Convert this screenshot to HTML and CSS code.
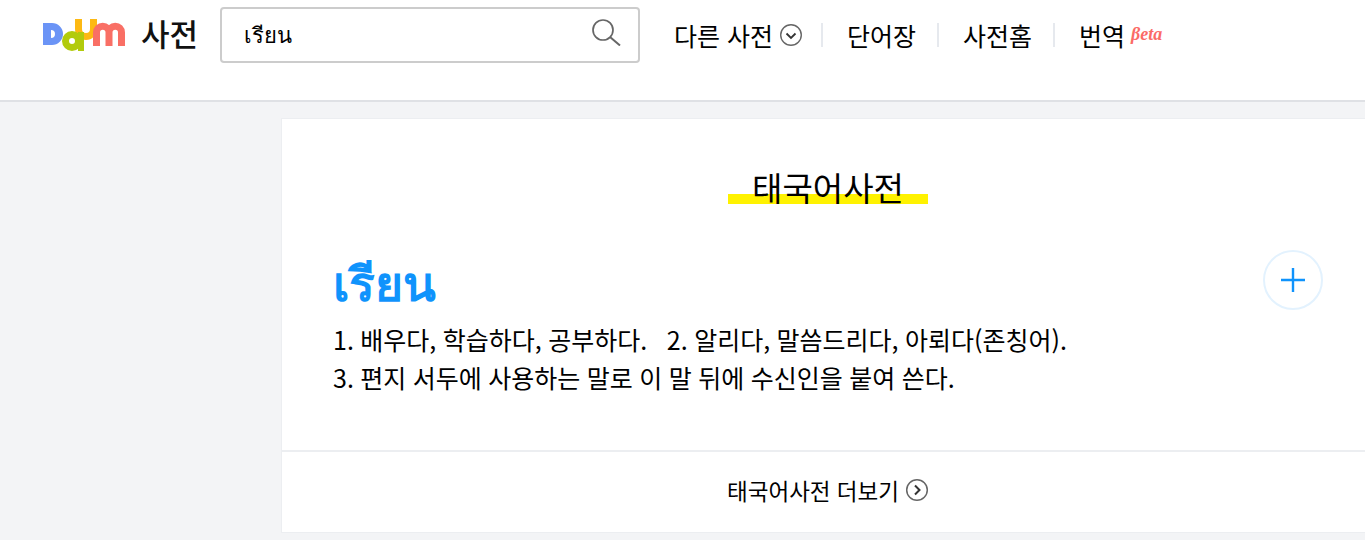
FILE: index.html
```html
<!DOCTYPE html>
<html lang="ko">
<head>
  <meta charset="UTF-8">
  <title>Daum 사전</title>
  <link rel="stylesheet" href="styles.css">
</head>
<body>
  <header class="header">
    <a class="logo" href="#">
      <svg class="logo-mark" width="84" height="44" viewBox="0 0 84 44" aria-label="Daum">
        <!-- u -->
        <path d="M36.500 8 V18 A7.500 7.500 0 0 0 51.500 18 V8" fill="none" stroke="#fdb913" stroke-width="7"/>
        <!-- D -->
        <path d="M1 12 H10 A11 11 0 0 1 10 34 H1 Z M9 19 V27 A4 4 0 0 0 9 19 Z" fill="#6b94f6" fill-rule="evenodd"/>
        <!-- a -->
        <circle cx="30" cy="30" r="6.500" fill="none" stroke="#b2cb0c" stroke-width="7"/>
        <rect x="36" y="21" width="6" height="19" fill="#b2cb0c"/>
        <!-- m -->
        <path d="M54.500 35 V21.500 A6.250 6.250 0 0 1 67 21.500 V35 M67 21.500 A6.250 6.250 0 0 1 79.500 21.500 V35" fill="none" stroke="#f96f65" stroke-width="7"/>
      </svg>
      <span class="logo-text">사전</span>
    </a>
    <form class="search">
      <span class="search-word">เรียน</span>
      <svg class="search-icon" width="29" height="27" viewBox="0 0 29 27">
        <circle cx="11" cy="11" r="10" fill="none" stroke="#666" stroke-width="1.700"/>
        <path d="M18 18 L28 26.500" stroke="#666" stroke-width="2"/>
      </svg>
    </form>
    <nav class="nav">
      <a class="nav-item" href="#">다른 사전
        <svg class="nav-icon" width="24" height="24" viewBox="0 0 24 24">
          <circle cx="12" cy="12" r="10.300" fill="none" stroke="#666" stroke-width="1.400"/>
          <path d="M7.500 10.500 L12 15 L16.500 10.500" fill="none" stroke="#333" stroke-width="1.800"/>
        </svg>
      </a>
      <a class="nav-item" href="#">단어장</a>
      <a class="nav-item" href="#">사전홈</a>
      <a class="nav-item" href="#">번역<span class="beta">βeta</span></a>
    </nav>
  </header>

  <main class="main">
    <section class="card">
      <div class="card-body">
        <h2 class="card-title"><span>태국어사전</span></h2>
        <div class="entry">
          <div class="entry-text">
            <h3 class="entry-word">เรียน</h3>
            <p class="entry-mean">1. 배우다, 학습하다, 공부하다. &nbsp;&nbsp;2. 알리다, 말씀드리다, 아뢰다(존칭어).</p>
            <p class="entry-mean">3. 편지 서두에 사용하는 말로 이 말 뒤에 수신인을 붙여 쓴다.</p>
          </div>
          <button class="add-btn" type="button" aria-label="단어장 추가">
            <svg width="26" height="26" viewBox="0 0 26 26">
              <path d="M13 1 V25 M1 13 H25" stroke="#0f93fc" stroke-width="2.400"/>
            </svg>
          </button>
        </div>
      </div>
      <a class="card-more" href="#">태국어사전 더보기
        <svg width="24" height="24" viewBox="0 0 24 24">
          <circle cx="12" cy="12" r="10.300" fill="none" stroke="#666" stroke-width="1.500"/>
          <path d="M10 7.500 L14.500 12 L10 16.500" fill="none" stroke="#333" stroke-width="2"/>
        </svg>
      </a>
    </section>
  </main>
</body>
</html>
```

FILE: styles.css
```css
html, body {
  height: 100%;
  overflow: hidden;
}
body {
  margin: 0;
  background-color: #f3f4f6;
  color: #000;
  font-family: "Noto Sans CJK KR", "Noto Sans", sans-serif;
}
a {
  color: inherit;
  text-decoration: none;
}
.header {
  height: 100px;
  display: flex;
  align-items: flex-start;
  background-color: #fff;
  border-bottom: 2px solid #dfe1e5;
  padding-left: 42px;
}
.logo {
  width: 178px;
  height: 64px;
  display: flex;
  align-items: center;
  gap: 15px;
}
.logo-mark {
  margin-top: 2px;
}
.logo-text {
  font-size: 31px;
  font-weight: 500;
  color: #111;
}
.search {
  width: 420px;
  height: 56px;
  margin-top: 7px;
  display: flex;
  align-items: center;
  justify-content: space-between;
  background-color: #fff;
  border: 2px solid #ccc;
  border-radius: 4px;
  padding: 0 17px 0 22px;
  box-sizing: border-box;
}
.search-word {
  font-size: 22px;
}
.search-icon {
  margin-top: -5px;
}
.nav {
  display: flex;
  align-items: center;
  height: 69px;
  margin-left: 34px;
}
.nav-item {
  display: flex;
  align-items: center;
  font-size: 25px;
  gap: 6px;
  height: 24px;
  padding-right: 21px;
  margin-right: 24px;
  border-right: 2px solid #e6e9ee;
  white-space: nowrap;
}
.nav-item:first-child {
  padding-right: 18px;
}
.nav-item:last-child {
  border-right: none;
}
.beta {
  font-family: "Liberation Serif", serif;
  font-style: italic;
  font-weight: 700;
  font-size: 18px;
  color: #fb6b66;
}
.main {
  padding: 16px 0 0 281px;
}
.card {
  width: 1094px;
  height: 415px;
  background-color: #fff;
  border: 1px solid #eceef1;
  box-sizing: border-box;
}
.card-body {
  height: 333px;
  padding: 44px 0 0 51px;
  border-bottom: 2px solid #eceef1;
  box-sizing: border-box;
}
.card-title {
  margin: 0 0 0 -51px;
  font-size: 33px;
  font-weight: 400;
  text-align: center;
}
.card-title span {
  display: inline-block;
  width: 200px;
  height: 40px;
  line-height: 36px;
  background: linear-gradient(transparent 25px, #fff200 25px, #fff200 35px, transparent 35px);
}
.entry {
  display: flex;
  width: 990px;
  justify-content: space-between;
}
.entry-word {
  margin: 39px 0 0;
  font-size: 48px;
  font-weight: 700;
  line-height: 60px;
  color: #0f93fc;
}
.entry-mean {
  margin: 0;
  font-size: 25px;
  line-height: 38px;
  word-spacing: -0.5px;
}
.entry-word + .entry-mean {
  margin-top: 10px;
}
.add-btn {
  width: 60px;
  height: 60px;
  margin-top: 39px;
  background-color: #fff;
  border: 2px solid #e3f2fe;
  border-radius: 50%;
  padding: 0;
  display: flex;
  align-items: center;
  justify-content: center;
}
.card-more {
  height: 76px;
  display: flex;
  align-items: center;
  justify-content: center;
  gap: 6px;
  font-size: 22.500px;
}
```
